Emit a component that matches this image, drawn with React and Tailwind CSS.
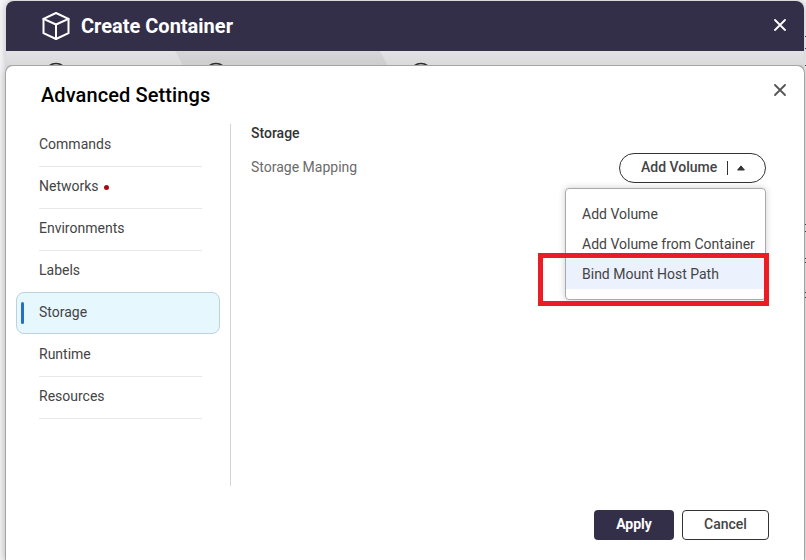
import React from "react";

const navItems = [
  { label: "Commands" },
  { label: "Networks", alert: true },
  { label: "Environments" },
  { label: "Labels" },
  { label: "Storage", active: true },
  { label: "Runtime" },
  { label: "Resources" },
];

const menuItems = [
  { label: "Add Volume" },
  { label: "Add Volume from Container" },
  { label: "Bind Mount Host Path", active: true },
];

const edgeMarks = [36, 48, 65, 224, 231, 258, 262, 292, 297];

function CloseIcon({ className }) {
  return (
    <svg className={className} width="12" height="12" viewBox="0 0 12 12" fill="none" stroke="currentColor" strokeWidth="1.8" strokeLinecap="round">
      <path d="M1 1 11 11M11 1 1 11" />
    </svg>
  );
}

function CubeIcon() {
  return (
    <svg width="28" height="28" viewBox="0 0 28 28" fill="none" stroke="white" strokeWidth="2" strokeLinejoin="round" strokeLinecap="round">
      <path d="M14 1 26.5 6.8V21.2L14 27 1.5 21.2V6.8Z" />
      <path d="M1.5 6.8 14 12.5 26.5 6.8M14 12.5V27" />
    </svg>
  );
}

function Header() {
  return (
    <header className="flex h-[50px] shrink-0 items-center rounded-t-lg bg-[#342f48] pl-[36px] pr-[18px] text-white">
      <CubeIcon />
      <h1 className="ml-[11px] text-xl font-bold leading-none">Create Container</h1>
      <CloseIcon className="-mt-[2px] ml-auto" />
    </header>
  );
}

function WizardSteps() {
  return (
    <svg className="block h-[14px] w-full shrink-0" viewBox="0 0 798 14">
      <defs>
        <linearGradient id="bar" x1="0" y1="0" x2="0" y2="1">
          <stop offset="0" stopColor="#e3e2e6" />
          <stop offset="1" stopColor="#dadada" />
        </linearGradient>
        <linearGradient id="step" x1="0" y1="0" x2="0" y2="1">
          <stop offset="0" stopColor="#d7d6da" />
          <stop offset="1" stopColor="#cdcdcd" />
        </linearGradient>
      </defs>
      <rect width="798" height="14" fill="url(#bar)" />
      <path d="M169 0H374L381.500 14H177Z" fill="url(#step)" />
      <g fill="none" stroke="#2b2b2b" strokeWidth="1.5">
        <circle cx="50" cy="23.500" r="11" />
        <circle cx="210" cy="23.500" r="11" />
        <circle cx="415" cy="23.500" r="11" />
      </g>
    </svg>
  );
}

function NavItem({ label, alert, active }) {
  if (active) {
    return (
      <li className="-mt-px flex h-[42px] items-center rounded-lg border border-[#bdd3db] bg-[#e6f7fe] pl-1">
        <span className="h-[22px] w-[3px] rounded-full bg-[#2470c4]" />
        <span className="-mt-[2px] ml-[15px] leading-5">{label}</span>
      </li>
    );
  }
  return (
    <li className="ml-[23px] mr-[18px] flex h-[42px] items-center border-b border-[#e8e8e8] first:h-[43px] [li.rounded-lg+&]:h-[43px]">
      <span className="-mt-[3px] leading-5">{label}</span>
      {alert && <span className="-mt-px ml-[5px] size-[5px] rounded-full bg-[#a50b12]" />}
    </li>
  );
}

function StorageMenu() {
  return (
    <div className="absolute right-0 top-[35px] h-[112px] w-[201px] rounded border border-[#aaa] bg-white pt-[10px] shadow-[0_0_7px_rgba(0,0,0,0.2)]">
      {menuItems.map((item) => (
        <div
          key={item.label}
          className={`flex h-[30px] items-center whitespace-nowrap pl-4 text-sm text-[#444] ${item.active ? "bg-[#ebf1fd]" : ""}`}
        >
          {item.label}
        </div>
      ))}
      <div className="absolute -left-[28px] -right-[4px] top-[64px] h-[53px] border-[5px] border-[#ec1c24]" />
    </div>
  );
}

function StoragePanel() {
  return (
    <section className="ml-5 flex-1 pr-[38px]">
      <h3 className="-mt-px text-sm font-medium leading-5 text-[#333]">Storage</h3>
      <div className="mt-[10px] flex h-[30px] items-center">
        <span className="-mt-[3px] text-sm text-[#6b6b6b]">Storage Mapping</span>
        <div className="relative ml-auto">
          <button className="flex h-[30px] w-[147px] items-center rounded-full border border-[#333] bg-white pl-[21px] text-sm font-medium text-[#444]">
            <span className="-mt-[2px]">Add Volume</span>
            <span className="ml-[10px] h-[14px] w-px bg-[#333]" />
            <svg className="ml-[9px]" width="8" height="6" viewBox="0 0 8 6" fill="#333" stroke="#333" strokeLinejoin="round">
              <path d="M4 .9 7.400 5H.6Z" />
            </svg>
          </button>
          <StorageMenu />
        </div>
      </div>
    </section>
  );
}

function SettingsDialog() {
  return (
    <main className="flex h-[496px] w-[800px] shrink-0 flex-col rounded-t-lg border border-b-0 border-[#a4a4a4] bg-white shadow-[0_0_8px_rgba(0,0,0,0.3)]">
      <div className="flex h-[58px] shrink-0 items-center pl-[35px] pr-[18px]">
        <h2 className="text-xl font-medium leading-none tracking-[0.1px] text-black">Advanced Settings</h2>
        <CloseIcon className="-mt-[11px] ml-auto text-[#555]" />
      </div>
      <div className="flex h-[362px] shrink-0">
        <nav className="w-[225px] border-r border-[#d4d4d4] pr-[10px] pl-[10px]">
          <ul className="text-sm text-[#444]">
            {navItems.map((item) => (
              <NavItem key={item.label} {...item} />
            ))}
          </ul>
        </nav>
        <StoragePanel />
      </div>
      <footer className="mt-[24px] flex justify-end gap-2 pr-[35px] text-sm leading-none">
        <button className="h-[30px] w-20 rounded bg-[#342f48] pb-[3px] font-bold text-white">Apply</button>
        <button className="h-[30px] w-[87px] rounded border border-[#333] pb-[3px] font-medium text-[#444]">Cancel</button>
      </footer>
    </main>
  );
}

export default function App() {
  return (
    <div className="relative h-[560px] w-[806px] overflow-hidden bg-[#f6f6f8] pt-px font-[Roboto,sans-serif]">
      <div className="ml-[6px] w-[798px] rounded-t-lg shadow-[0_0_8px_rgba(0,0,0,0.25)]">
        <Header />
        <WizardSteps />
      </div>
      <div className="ml-[5px]">
        <SettingsDialog />
      </div>
      {edgeMarks.map((y) => (
        <span key={y} className="absolute right-0 h-px w-px bg-[#444]" style={{ top: y }} />
      ))}
    </div>
  );
}
